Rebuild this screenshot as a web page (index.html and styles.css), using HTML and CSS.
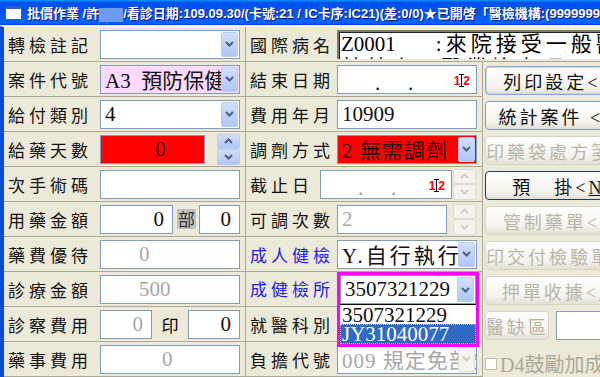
FILE: index.html
```html
<!DOCTYPE html>
<html lang="zh-Hant">
<head>
  <meta charset="UTF-8" />
  <title>批價作業</title>
  <link rel="stylesheet" href="styles.css">
</head>
<body>
<div class="titlebar">
  <span class="app-icon"></span>
  <span class="title-text">批價作業 /許<span class="redact"></span>/看診日期:109.09.30/(卡號:21 / IC卡序:IC21)(差:0/0)★已開啓「醫檢機構:(9999999999)」</span>
</div>

<div class="form-grid">
  <!-- 第 1 列 -->
  <div class="cell">
    <span class="label">轉檢註記</span>
    <div class="field select w140"><span class="val"></span><span class="drop"><svg width="9" height="6" viewBox="0 0 9 6"><polyline points="1,1 4.5,4.5 8,1" /></svg></span></div>
  </div>
  <div class="cell c2 span2">
    <span class="label">國際病名</span>
    <div class="memo">
      <div class="memo-line"><span class="code">Z0001</span><span class="colon">:</span><span class="cjk-wide">來院接受一般醫學檢查</span></div>
      <div class="memo-line"><span class="cjk-wide">林林木乃醫業檢查項目</span></div>
    </div>
  </div>

  <!-- 第 2 列 -->
  <div class="cell">
    <span class="label">案件代號</span>
    <div class="field select w140 pink"><span class="val">A3&nbsp;&nbsp;預防保健</span><span class="drop"><svg width="9" height="6" viewBox="0 0 9 6"><polyline points="1,1 4.5,4.5 8,1" /></svg></span></div>
  </div>
  <div class="cell c2">
    <span class="label">結束日期</span>
    <div class="field date w140">
      <span class="dot d1">.</span><span class="dot d2">.</span>
      <span class="caret-mark"><b>1</b><i></i><b>2</b></span>
    </div>
  </div>
  <div class="cell btn-cell">
    <button class="btn focus">列印設定&lt;<u>S</u>&gt;</button>
  </div>

  <!-- 第 3 列 -->
  <div class="cell">
    <span class="label">給付類別</span>
    <div class="field select w140"><span class="val">4</span><span class="drop"><svg width="9" height="6" viewBox="0 0 9 6"><polyline points="1,1 4.5,4.5 8,1" /></svg></span></div>
  </div>
  <div class="cell c2">
    <span class="label">費用年月</span>
    <div class="field w140"><span class="val">10909</span></div>
  </div>
  <div class="cell btn-cell">
    <button class="btn">統計案件 &lt;<u>C</u>&gt;</button>
  </div>

  <!-- 第 4 列 -->
  <div class="cell">
    <span class="label">給藥天數</span>
    <div class="field red w105 center"><span class="val">0</span></div>
    <div class="spin gap12">
      <span class="spin-btn"><svg width="9" height="6" viewBox="0 0 9 6"><polyline points="1,5 4.5,1.5 8,5" /></svg></span>
      <span class="spin-btn"><svg width="9" height="6" viewBox="0 0 9 6"><polyline points="1,1 4.5,4.5 8,1" /></svg></span>
    </div>
  </div>
  <div class="cell c2">
    <span class="label">調劑方式</span>
    <div class="field select w140 red"><span class="val spaced">2&nbsp;無需調劑</span><span class="drop"><svg width="9" height="6" viewBox="0 0 9 6"><polyline points="1,1 4.5,4.5 8,1" /></svg></span></div>
  </div>
  <div class="cell btn-cell">
    <button class="btn" disabled>印藥袋處方箋&lt;<u>P</u>&gt;</button>
  </div>

  <!-- 第 5 列 -->
  <div class="cell">
    <span class="label">次手術碼</span>
    <div class="field w140"></div>
  </div>
  <div class="cell c2">
    <span class="label short">截止日</span>
    <div class="field date w132 muted">
      <span class="dot d1">.</span><span class="dot d2">.</span>
      <span class="caret-mark"><b>1</b><i></i><b>2</b></span>
    </div>
    <div class="spin off gap1">
      <span class="spin-btn"><svg width="9" height="6" viewBox="0 0 9 6"><polyline points="1,5 4.5,1.5 8,5" /></svg></span>
      <span class="spin-btn"><svg width="9" height="6" viewBox="0 0 9 6"><polyline points="1,1 4.5,4.5 8,1" /></svg></span>
    </div>
  </div>
  <div class="cell btn-cell">
    <button class="btn default">預　掛&lt;<u>N</u>&gt;</button>
  </div>

  <!-- 第 6 列 -->
  <div class="cell">
    <span class="label">用藥金額</span>
    <div class="field w73 right"><span class="val">0</span></div>
    <span class="tag">部</span>
    <div class="field w41 right"><span class="val">0</span></div>
  </div>
  <div class="cell c2">
    <span class="label">可調次數</span>
    <div class="field w110 muted"><span class="val">2</span></div>
    <div class="spin off gap6">
      <span class="spin-btn"><svg width="9" height="6" viewBox="0 0 9 6"><polyline points="1,5 4.5,1.5 8,5" /></svg></span>
      <span class="spin-btn"><svg width="9" height="6" viewBox="0 0 9 6"><polyline points="1,1 4.5,4.5 8,1" /></svg></span>
    </div>
  </div>
  <div class="cell btn-cell">
    <button class="btn" disabled>管制藥單&lt;<u>E</u>&gt;</button>
  </div>

  <!-- 第 7 列 -->
  <div class="cell">
    <span class="label">藥費優待</span>
    <div class="field w140 muted ind37"><span class="val">0</span></div>
  </div>
  <div class="cell c2">
    <span class="label blue">成人健檢</span>
    <div class="field select w140"><span class="val wide">Y.自行執行</span><span class="drop"><svg width="9" height="6" viewBox="0 0 9 6"><polyline points="1,1 4.5,4.5 8,1" /></svg></span></div>
  </div>
  <div class="cell btn-cell">
    <button class="btn" disabled>印交付檢驗單&lt;<u>L</u>&gt;</button>
  </div>

  <!-- 第 8 列 -->
  <div class="cell">
    <span class="label">診療金額</span>
    <div class="field w140 muted ind37"><span class="val">500</span></div>
  </div>
  <div class="cell c2 open-cell">
    <span class="label blue">成健檢所</span>
    <div class="combo-open">
      <div class="field select w136"><span class="val">3507321229</span><span class="drop"><svg width="9" height="6" viewBox="0 0 9 6"><polyline points="1,1 4.5,4.5 8,1" /></svg></span></div>
      <ul class="droplist">
        <li>3507321229</li>
        <li class="picked">JY31040077</li>
      </ul>
    </div>
  </div>
  <div class="cell btn-cell">
    <button class="btn" disabled>押單收據&lt;<u>K</u>&gt;</button>
  </div>

  <!-- 第 9 列 -->
  <div class="cell">
    <span class="label">診察費用</span>
    <div class="field w52 muted right"><span class="val">0</span></div>
    <span class="mid">印</span>
    <div class="field w52 right"><span class="val">0</span></div>
  </div>
  <div class="cell c2">
    <span class="label">就醫科別</span>
    <div class="field select w140"><span class="val"></span></div>
  </div>
  <div class="cell btn-cell">
    <button class="btn small" disabled>醫缺區</button>
    <div class="field w60"></div>
  </div>

  <!-- 第 10 列 -->
  <div class="cell">
    <span class="label">藥事費用</span>
    <div class="field w140 muted ind61"><span class="val">0</span></div>
  </div>
  <div class="cell c2">
    <span class="label">負擔代號</span>
    <div class="field select w140 muted off"><span class="val spaced">009&nbsp;規定免部分負擔</span><span class="drop"><svg width="9" height="6" viewBox="0 0 9 6"><polyline points="1,1 4.5,4.5 8,1" /></svg></span></div>
  </div>
  <div class="cell btn-cell">
    <label class="check"><span class="box"></span><span>D4鼓勵加成</span></label>
  </div>
</div>
</body>
</html>
```

FILE: styles.css
```css
* {
  box-sizing: border-box;
}

body {
  margin: 0;
  width: 600px;
  height: 377px;
  overflow: hidden;
  background-color: #ece9d8;
  font-family: "Noto Sans CJK TC", sans-serif;
}

/* 標題列 (XP 藍) */
.titlebar {
  height: 25px;
  width: 680px;
  display: flex;
  align-items: center;
  padding-left: 5px;
  background: linear-gradient(#0997ff 0, #0053ee 10%, #0050ee 40%, #0066ff 88%, #005bff 95%, #003dd7 100%);
  color: white;
  white-space: nowrap;
  overflow: hidden;
}

.app-icon {
  width: 17px;
  height: 14px;
  margin-right: 5px;
  background: white;
  border: 1px solid #2a5ec8;
  border-top: 3px solid #2a5ec8;
  flex: none;
}

.title-text {
  font: bold 13px "Liberation Sans", "Noto Sans CJK TC", sans-serif;
  text-shadow: 1px 1px #0f1089;
}

.redact {
  display: inline-block;
  width: 24px;
  height: 14px;
  vertical-align: middle;
  background: #6d9cf5;
}

/* 表單格 */
.form-grid {
  display: grid;
  grid-template-columns: 242px 237px 180px;
  grid-auto-rows: 35px;
  border-left: 4px solid #0a4ad8;
  border-top: 1px solid #fff;
  margin-top: 1px;
}

.cell {
  display: flex;
  align-items: center;
  padding: 2px 4px 2px 4px;
  border-bottom: 1px solid #aca899;
  border-right: 1px solid #aca899;
}

.cell.span2 {
  grid-column: span 2;
  border-right: none;
  padding-right: 0;
}

.label {
  width: 92px;
  flex: none;
  font-size: 17px;
  letter-spacing: 4px;
  color: #111;
  white-space: nowrap;
}

.c2 .label {
  width: 87px;
}

.c2 .label.short {
  width: 70px;
}

.label.blue {
  color: #2020f0;
}

.field {
  position: relative;
  height: 29px;
  flex: none;
  display: flex;
  align-items: center;
  padding: 0 4px;
  border: 1px solid #7f9db9;
  background: white;
  font: 21px "Liberation Serif", "Noto Sans CJK TC", serif;
  color: #111;
  white-space: nowrap;
  overflow: hidden;
}

.w140 { width: 140px; }
.w136 { width: 136px; }
.w132 { width: 132px; }
.w110 { width: 110px; }
.w105 { width: 105px; }
.w73 { width: 73px; }
.w60 { width: 80px; margin-left: 7px; }
.w52 { width: 52px; }
.w41 { width: 41px; margin-left: 3px; }

.field.right { justify-content: flex-end; padding-right: 8px; }
.field.center { justify-content: center; padding-left: 20px; }
.field.ind37 { padding-left: 38px; }
.field.ind61 { padding-left: 61px; }

.field.pink { background: #ffd9ff; }
.field.red { background: #ff0000; }
.field.red .val { color: #300; }
.field.muted { color: #a8a8a8; }

.val.spaced { letter-spacing: 1px; }
.val.wide { letter-spacing: 3px; }

/* 下拉按鈕 */
.drop {
  position: absolute;
  top: 1px;
  right: 1px;
  bottom: 1px;
  width: 17px;
  display: flex;
  align-items: center;
  justify-content: center;
  border: 1px solid #bccdf5;
  border-radius: 2px;
  background: linear-gradient(#d2defb, #afc6f5);
}

.drop svg polyline,
.spin-btn svg polyline {
  fill: none;
  stroke: #4d6185;
  stroke-width: 2;
}

.field.off .drop {
  background: #f4f3ee;
  border-color: #e2e0d6;
}

.field.off .drop svg polyline {
  stroke: #c9c7ba;
}

/* 上下鈕 */
.spin {
  display: flex;
  flex-direction: column;
  width: 23px;
  height: 31px;
  flex: none;
}

.gap12 { margin-left: 12px; }
.gap6 { margin-left: 6px; }
.gap1 { margin-left: 1px; }

.spin-btn {
  flex: 1;
  display: flex;
  align-items: center;
  justify-content: center;
  border: 1px solid #bccdf5;
  border-radius: 2px;
  background: linear-gradient(#d2defb, #afc6f5);
}

.spin.off .spin-btn {
  background: #f4f3ee;
  border-color: #dedbd0;
}

.spin.off .spin-btn svg polyline {
  stroke: #d0cec4;
}

/* 日期欄 */
.field.date .dot {
  position: absolute;
  top: 5px;
}

.field.date .d1 { left: 37px; }
.field.date .d2 { left: 70px; }
.field.date.muted .dot { color: #999; }

.caret-mark {
  position: absolute;
  right: 6px;
  top: 8px;
  display: flex;
  align-items: center;
  font: bold 12px "Liberation Sans", sans-serif;
  color: #f00;
}

.caret-mark i {
  position: relative;
  width: 1px;
  height: 13px;
  margin: 0 1px;
  background: #000;
}

.caret-mark i::before,
.caret-mark i::after {
  content: "";
  position: absolute;
  left: -2px;
  width: 5px;
  height: 1px;
  background: #000;
}

.caret-mark i::before { top: 0; }
.caret-mark i::after { bottom: 0; }

/* 小標籤 */
.tag {
  margin-left: 4px;
  width: 19px;
  height: 20px;
  font-size: 17px;
  line-height: 20px;
  text-align: center;
  background: #c0c0c0;
  color: #333;
  flex: none;
}

.mid {
  width: 36px;
  text-align: center;
  font-size: 17px;
  flex: none;
}

/* 國際病名 */
.memo {
  flex: 1;
  height: 29px;
  overflow: hidden;
  background: white;
  border-top: 2px solid #7a7a7a;
  border-left: 2px solid #7a7a7a;
  box-shadow: inset 1px 1px #222;
  font: 21px "Liberation Serif", "Noto Sans CJK TC", serif;
  line-height: 24px;
  padding-left: 2px;
  white-space: nowrap;
}

.memo .code { margin-right: 40px; }
.memo .colon { margin-right: 4px; }
.memo .cjk-wide { letter-spacing: 4px; }

/* 展開的下拉 */
.open-cell {
  position: relative;
  padding-top: 0;
  align-items: flex-start;
}

.open-cell .label {
  align-self: center;
}

.combo-open {
  position: relative;
  border: 3px solid #ff00ff;
  border-bottom: none;
}

.droplist {
  position: absolute;
  z-index: 2;
  top: 100%;
  left: -3px;
  right: -3px;
  margin: 0;
  padding: 0;
  list-style: none;
  border: 3px solid #ff00ff;
  border-top: none;
  background: white;
}

.droplist li {
  height: 20px;
  padding-left: 2px;
  font: 21px/20px "Liberation Serif", serif;
  color: #111;
  border-top: 1px solid #000;
}

.droplist li + li {
  border-top: none;
}

.droplist li.picked {
  background: #316ac5;
  color: white;
  outline: 1px dotted #e0c080;
  outline-offset: -1px;
}

/* 右側按鈕 */
.btn-cell {
  border: none;
  padding: 4px 0 2px 2px;
  align-items: flex-start;
}

.btn {
  width: 160px;
  height: 29px;
  flex: none;
  padding: 0;
  border: 1px solid #7f9db9;
  border-radius: 4px;
  background: linear-gradient(#ffffff, #f4f3ee 70%, #e3e0d4);
  font: 18px "Liberation Serif", "Noto Sans CJK TC", serif;
  letter-spacing: 3px;
  color: #111;
  text-align: center;
  white-space: nowrap;
  overflow: hidden;
}

.btn.focus {
  border-color: #8aa8dc;
  box-shadow: inset 0 0 0 1px #c6d6f2;
}

.btn.default {
  border-color: #1c3a6e;
}

.btn:disabled {
  color: #b8b5a6;
  border-color: #d6d3c5;
}

.btn.small {
  width: 64px;
}

.check {
  display: flex;
  align-items: center;
  margin-top: 3px;
  font: 20px "Liberation Serif", "Noto Sans CJK TC", serif;
  color: #aca899;
  white-space: nowrap;
}

.check .box {
  width: 12px;
  height: 12px;
  flex: none;
  margin-right: 3px;
  border: 1px solid #c0bdb0;
  background: white;
}
```
